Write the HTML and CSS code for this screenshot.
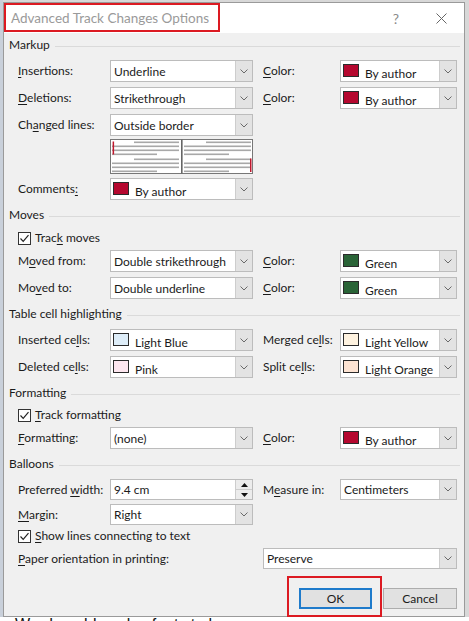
FILE: index.html
```html
<!DOCTYPE html>
<html>
<head>
<meta charset="utf-8">
<title>Advanced Track Changes Options</title>
<link rel="stylesheet" href="styles.css">
</head>
<body>
<div class="screen">
  <div class="dialog">
    <div class="titlebar">
      <span class="title">Advanced Track Changes Options</span>
      <span class="help">?</span>
      <span class="close"><svg width="11" height="11" viewBox="0 0 11 11"><path d="M0.5 0.5 L10.5 10.5 M10.5 0.5 L0.5 10.5" stroke="#666" stroke-width="1" fill="none"/></svg></span>
    </div>
    <div class="content">
      <div class="ghead h-markup"><span>Markup</span></div>

      <div class="row r22 mt7">
        <span class="lbl"><u>I</u>nsertions:</span>
        <div class="select"><span class="val">Underline</span><span class="drop"><svg class="chev" viewBox="0 0 8 5"><polyline points="0.5,0.5 4,4 7.5,0.5"/></svg></span></div>
        <span class="lbl lbl2"><u>C</u>olor:</span>
        <div class="select color"><span class="swatch sw-red"></span><span class="val">By author</span><span class="drop"><svg class="chev" viewBox="0 0 8 5"><polyline points="0.5,0.5 4,4 7.5,0.5"/></svg></span></div>
      </div>

      <div class="row r22 mt5">
        <span class="lbl"><u>D</u>eletions:</span>
        <div class="select"><span class="val">Strikethrough</span><span class="drop"><svg class="chev" viewBox="0 0 8 5"><polyline points="0.5,0.5 4,4 7.5,0.5"/></svg></span></div>
        <span class="lbl lbl2"><u>C</u>olor:</span>
        <div class="select color"><span class="swatch sw-red"></span><span class="val">By author</span><span class="drop"><svg class="chev" viewBox="0 0 8 5"><polyline points="0.5,0.5 4,4 7.5,0.5"/></svg></span></div>
      </div>

      <div class="row r22 mt5">
        <span class="lbl">Ch<u>a</u>nged lines:</span>
        <div class="select"><span class="val">Outside border</span><span class="drop"><svg class="chev" viewBox="0 0 8 5"><polyline points="0.5,0.5 4,4 7.5,0.5"/></svg></span></div>
      </div>

      <div class="preview">
        <svg width="143" height="35" viewBox="0 0 143 35">
          <rect x="0.5" y="0.5" width="142" height="34" fill="#fff" stroke="#777"/>
          <rect x="71" y="0.5" width="1.6" height="34" fill="#666"/>
          <g fill="#a8a8a8">
            <rect x="24" y="2.5" width="45" height="1.6"/>
            <rect x="2" y="6.5" width="67" height="1.6"/>
            <rect x="2" y="10.5" width="67" height="1.6"/>
            <rect x="2" y="14.5" width="45" height="1.6"/>
            <rect x="24" y="19.5" width="45" height="1.6"/>
            <rect x="2" y="23.5" width="67" height="1.6"/>
            <rect x="2" y="27.5" width="67" height="1.6"/>
            <rect x="2" y="31.5" width="45" height="1.6"/>
            <rect x="96" y="2.5" width="45" height="1.6"/>
            <rect x="74" y="6.5" width="67" height="1.6"/>
            <rect x="74" y="10.5" width="67" height="1.6"/>
            <rect x="74" y="14.5" width="45" height="1.6"/>
            <rect x="96" y="19.5" width="45" height="1.6"/>
            <rect x="74" y="23.5" width="67" height="1.6"/>
            <rect x="74" y="27.5" width="67" height="1.6"/>
            <rect x="74" y="31.5" width="45" height="1.6"/>
          </g>
          <rect x="2.6" y="2.5" width="1.5" height="13" fill="#c0182e"/>
          <rect x="140" y="19.5" width="1.5" height="13.5" fill="#c0182e"/>
        </svg>
      </div>

      <div class="row r22 mt4">
        <span class="lbl">Comments<u>:</u></span>
        <div class="select color"><span class="swatch sw-red"></span><span class="val">By author</span><span class="drop"><svg class="chev" viewBox="0 0 8 5"><polyline points="0.5,0.5 4,4 7.5,0.5"/></svg></span></div>
      </div>

      <div class="ghead mt7"><span>Moves</span></div>

      <div class="check mt6">
        <svg class="cb" width="13" height="13" viewBox="0 0 13 13"><rect x="0.5" y="0.5" width="12" height="12" fill="#fff" stroke="#333"/><polyline points="2.5,6.5 5.2,9.3 10.5,3.2" fill="none" stroke="#222" stroke-width="1.2"/></svg>
        <span>Trac<u>k</u> moves</span>
      </div>

      <div class="row r22 mt5">
        <span class="lbl">M<u>o</u>ved from:</span>
        <div class="select"><span class="val">Double strikethrough</span><span class="drop"><svg class="chev" viewBox="0 0 8 5"><polyline points="0.5,0.5 4,4 7.5,0.5"/></svg></span></div>
        <span class="lbl lbl2"><u>C</u>olor:</span>
        <div class="select color"><span class="swatch sw-green"></span><span class="val">Green</span><span class="drop"><svg class="chev" viewBox="0 0 8 5"><polyline points="0.5,0.5 4,4 7.5,0.5"/></svg></span></div>
      </div>

      <div class="row r22 mt5">
        <span class="lbl">Mo<u>v</u>ed to:</span>
        <div class="select"><span class="val">Double underline</span><span class="drop"><svg class="chev" viewBox="0 0 8 5"><polyline points="0.5,0.5 4,4 7.5,0.5"/></svg></span></div>
        <span class="lbl lbl2"><u>C</u>olor:</span>
        <div class="select color"><span class="swatch sw-green"></span><span class="val">Green</span><span class="drop"><svg class="chev" viewBox="0 0 8 5"><polyline points="0.5,0.5 4,4 7.5,0.5"/></svg></span></div>
      </div>

      <div class="ghead mt7"><span>Table cell highlighting</span></div>

      <div class="row r22 mt7">
        <span class="lbl">Inserted ce<u>l</u>ls:</span>
        <div class="select color"><span class="swatch sw-lblue"></span><span class="val">Light Blue</span><span class="drop"><svg class="chev" viewBox="0 0 8 5"><polyline points="0.5,0.5 4,4 7.5,0.5"/></svg></span></div>
        <span class="lbl lbl2">Merged ce<u>l</u>ls:</span>
        <div class="select color"><span class="swatch sw-lyellow"></span><span class="val">Light Yellow</span><span class="drop"><svg class="chev" viewBox="0 0 8 5"><polyline points="0.5,0.5 4,4 7.5,0.5"/></svg></span></div>
      </div>

      <div class="row r22 mt5">
        <span class="lbl">Deleted ce<u>l</u>ls:</span>
        <div class="select color"><span class="swatch sw-pink"></span><span class="val">Pink</span><span class="drop"><svg class="chev" viewBox="0 0 8 5"><polyline points="0.5,0.5 4,4 7.5,0.5"/></svg></span></div>
        <span class="lbl lbl2">Split ce<u>l</u>ls:</span>
        <div class="select color"><span class="swatch sw-lorange"></span><span class="val">Light Orange</span><span class="drop"><svg class="chev" viewBox="0 0 8 5"><polyline points="0.5,0.5 4,4 7.5,0.5"/></svg></span></div>
      </div>

      <div class="ghead mt7"><span>Formatting</span></div>

      <div class="check mt5">
        <svg class="cb" width="13" height="13" viewBox="0 0 13 13"><rect x="0.5" y="0.5" width="12" height="12" fill="#fff" stroke="#333"/><polyline points="2.5,6.5 5.2,9.3 10.5,3.2" fill="none" stroke="#222" stroke-width="1.2"/></svg>
        <span><u>T</u>rack formatting</span>
      </div>

      <div class="row r22 mt5">
        <span class="lbl"><u>F</u>ormatting:</span>
        <div class="select"><span class="val">(none)</span><span class="drop"><svg class="chev" viewBox="0 0 8 5"><polyline points="0.5,0.5 4,4 7.5,0.5"/></svg></span></div>
        <span class="lbl lbl2"><u>C</u>olor:</span>
        <div class="select color"><span class="swatch sw-red"></span><span class="val">By author</span><span class="drop"><svg class="chev" viewBox="0 0 8 5"><polyline points="0.5,0.5 4,4 7.5,0.5"/></svg></span></div>
      </div>

      <div class="ghead mt7"><span>Balloons</span></div>

      <div class="row r21 mt7">
        <span class="lbl">Preferred <u>w</u>idth:</span>
        <div class="select spin"><span class="val">9.4 cm</span><span class="spinbtns"><span class="sb"><svg width="7" height="4" viewBox="0 0 7 4"><polygon points="3.5,0 7,4 0,4" fill="#111"/></svg></span><span class="sb"><svg width="7" height="4" viewBox="0 0 7 4"><polygon points="0,0 7,0 3.5,4" fill="#111"/></svg></span></span></div>
        <span class="lbl lbl2">M<u>e</u>asure in:</span>
        <div class="select"><span class="val">Centimeters</span><span class="drop"><svg class="chev" viewBox="0 0 8 5"><polyline points="0.5,0.5 4,4 7.5,0.5"/></svg></span></div>
      </div>

      <div class="row r21 mt4">
        <span class="lbl"><u>M</u>argin:</span>
        <div class="select"><span class="val">Right</span><span class="drop"><svg class="chev" viewBox="0 0 8 5"><polyline points="0.5,0.5 4,4 7.5,0.5"/></svg></span></div>
      </div>

      <div class="check mt2">
        <svg class="cb" width="13" height="13" viewBox="0 0 13 13"><rect x="0.5" y="0.5" width="12" height="12" fill="#fff" stroke="#333"/><polyline points="2.5,6.5 5.2,9.3 10.5,3.2" fill="none" stroke="#222" stroke-width="1.2"/></svg>
        <span><u>S</u>how lines connecting to text</span>
      </div>

      <div class="row paper r21 mt5">
        <span class="lbl"><u>P</u>aper orientation in printing:</span>
        <div class="select"><span class="val">Preserve</span><span class="drop"><svg class="chev" viewBox="0 0 8 5"><polyline points="0.5,0.5 4,4 7.5,0.5"/></svg></span></div>
      </div>

      <div class="buttons">
        <button class="btn btn-ok">OK</button>
        <button class="btn">Cancel</button>
      </div>
    </div>
  </div>
  <div class="doc">Word enables also fonts to be</div>
  <div class="mark mark-title"></div>
  <div class="mark mark-ok"></div>
</div>
</body>
</html>
```

FILE: styles.css
```css
html, body {
  margin: 0;
  padding: 0;
}
body {
  width: 469px;
  height: 621px;
  overflow: hidden;
  background: #d6d6d6;
  font-family: "Lato", "Noto Sans", sans-serif;
  font-size: 12px;
  color: #1b1b1b;
}
.screen {
  position: relative;
  width: 469px;
  height: 621px;
  overflow: hidden;
  background: linear-gradient(to right, #c9d0da 0, #c9d0da 3px, #d8d8d8 3px);
}
.dialog {
  margin: 2px 0 0 3px;
  width: 462px;
  height: 615px;
  box-sizing: border-box;
  border: 1px solid #9a9a9a;
  background: #f0f0f0;
  display: flex;
  flex-direction: column;
}
.titlebar {
  height: 30px;
  flex: none;
  background: #fff;
  display: flex;
  align-items: center;
  padding: 0 8px 0 7px;
}
.title {
  flex: 1;
  font-size: 13.5px;
  color: #9a9a9a;
  white-space: nowrap;
}
.help {
  width: 20px;
  text-align: center;
  font-size: 14px;
  color: #8a8a8a;
  margin-right: 20px;
}
.close {
  width: 30px;
  display: flex;
  justify-content: center;
  align-items: center;
}
.content {
  display: flex;
  flex-direction: column;
}
u {
  text-decoration: underline;
  text-decoration-thickness: 1px;
  text-underline-offset: 2px;
}
.mt2 { margin-top: 2px; }
.mt4 { margin-top: 4px; }
.mt5 { margin-top: 5px; }
.mt6 { margin-top: 6px; }
.mt7 { margin-top: 7px; }

.ghead {
  height: 16px;
  line-height: 16px;
  display: flex;
  align-items: flex-start;
  padding-left: 5px;
  padding-right: 4px;
  white-space: nowrap;
}
.ghead::after {
  content: "";
  flex: 1;
  height: 1px;
  margin-top: 9px;
  margin-left: 5px;
  background: #dadada;
}
.h-markup { margin-top: 4px; }

.row {
  display: grid;
  grid-template-columns: 92px 143px 87px 117px;
  padding-left: 14px;
  align-items: stretch;
}
.row.r22 { height: 22px; line-height: 22px; }
.row.r21 { height: 21px; line-height: 21px; }
.row.paper { grid-template-columns: 245px 194px; }
.lbl {
  display: block;
  white-space: nowrap;
}
.lbl2 { padding-left: 10px; }

.select {
  display: flex;
  box-sizing: border-box;
  border: 1px solid #bcbcbc;
  background: #fff;
  min-width: 0;
  line-height: normal;
}
.val {
  flex: 1;
  min-width: 0;
  padding-left: 3px;
  white-space: nowrap;
  overflow: hidden;
  display: flex;
  align-items: center;
}
.drop {
  width: 16px;
  flex: none;
  background: #e3e3e3;
  border-left: 1px solid #cdcdcd;
  display: flex;
  align-items: center;
  justify-content: center;
}
.chev {
  width: 8px;
  height: 5px;
  fill: none;
  stroke: #6a6a6a;
  stroke-width: 1;
}
.color .swatch {
  flex: none;
  width: 14px;
  height: 11px;
  margin: 3px 0 0 2px;
  border: 1px solid #2b2b2b;
}
.color .val {
  padding-left: 6px;
  padding-top: 4px;
}
.sw-red { background: #b5082f; }
.sw-green { background: #2a6437; }
.sw-lblue { background: #deedf8; }
.sw-pink { background: #fde6ef; }
.sw-lyellow { background: #fff3e0; }
.sw-lorange { background: #fde3d2; }

.spinbtns {
  width: 16px;
  flex: none;
  display: flex;
  flex-direction: column;
  border-left: 1px solid #cdcdcd;
  background: #ececec;
}
.sb {
  flex: 1;
  display: flex;
  align-items: center;
  justify-content: center;
}
.sb + .sb { border-top: 1px solid #cdcdcd; }

.preview {
  margin-top: 3px;
  margin-left: 106px;
  height: 35px;
  display: flex;
}

.check {
  height: 16px;
  display: flex;
  align-items: center;
  padding-left: 14px;
  white-space: nowrap;
}
.check .cb {
  flex: none;
  margin-right: 4px;
  margin-top: 2px;
}

.buttons {
  margin-top: 19px;
  height: 21px;
  display: flex;
  justify-content: flex-end;
  gap: 11px;
  padding-right: 7px;
}
.btn {
  margin: 0;
  padding: 0;
  font-family: inherit;
  font-size: 12px;
  color: #1b1b1b;
  background: #e1e1e1;
  border: 1px solid #adadad;
  width: 74px;
  height: 21px;
  box-sizing: border-box;
}
.btn-ok {
  width: 73px;
  border: 2px solid #1f7bcb;
}

.doc {
  margin-top: 0;
  height: 20px;
  background: #fff;
  padding-left: 15px;
  font-family: "Liberation Sans", sans-serif;
  font-size: 16px;
  line-height: 16px;
  color: #111;
  white-space: nowrap;
}

.mark {
  position: absolute;
  box-sizing: border-box;
  border: 2px solid #dc1a22;
}
.mark-title {
  left: 4px;
  top: 3px;
  width: 216px;
  height: 29px;
}
.mark-ok {
  left: 287px;
  top: 576px;
  width: 95px;
  height: 41px;
}
```
